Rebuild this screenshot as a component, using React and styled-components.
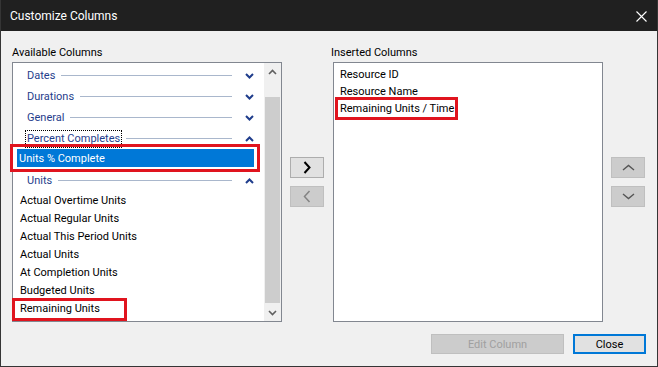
import React from "react";
import styled, { createGlobalStyle } from "styled-components";

const Global = createGlobalStyle`
  html, body { margin: 0; padding: 0; background: #f0f0f0; }
  body { font-family: Roboto, "Open Sans", sans-serif; }
`;

const FONT = `Roboto, "Open Sans", sans-serif`;

const Window = styled.div`
  width: 658px;
  height: 367px;
  box-sizing: border-box;
  border: 1px solid #353535;
  border-top: none;
  background: #f0f0f0;
  display: flex;
  flex-direction: column;
  font-family: ${FONT};
  font-size: 11px;
  color: #000;
`;

const TitleBar = styled.div`
  height: 31px;
  flex: none;
  box-sizing: border-box;
  background: #202020;
  color: #fff;
  display: flex;
  align-items: center;
  justify-content: space-between;
  padding: 1px 10px 0 9px;
  font-size: 12px;
`;

const Content = styled.div`
  padding: 13px 11px 0 11px;
  display: flex;
  flex-direction: column;
`;

const Grid = styled.div`
  display: grid;
  grid-template-columns: 278px 43px 278px 34px;
  grid-template-rows: 18px 260px;
  grid-template-areas:
    "lblL . lblR ."
    "listL mid listR side";
`;

const Label = styled.div`
  grid-area: ${(p) => p.$area};
  line-height: 16px;
  padding-top: 1px;
  margin-left: ${(p) => p.$shift || 0}px;
`;

const ListBox = styled.div`
  grid-area: ${(p) => p.$area};
  width: 270px;
  height: 260px;
  box-sizing: border-box;
  border: 1px solid #828790;
  background: #fff;
  display: flex;
`;

const ListBody = styled.div`
  flex: 1;
  display: flex;
  flex-direction: column;
  padding-top: ${(p) => p.$pad || 1}px;
`;

const GroupHeader = styled.div`
  height: 21px;
  box-sizing: border-box;
  padding: 2px 10px 0 14px;
  display: flex;
  align-items: center;
  color: #1f3d8c;
  gap: 5px;
`;

const HeaderText = styled.span`
  line-height: 16px;
  padding: 0 1px;
  margin-left: -1px;
  outline: ${(p) => (p.$focus ? "1px dotted #000" : "none")};
  outline-offset: 0px;
`;

const HeaderLine = styled.span`
  flex: 1;
  height: 1px;
  background: #a9b7cc;
  margin-right: 8px;
`;

const GroupItems = styled.div`
  display: flex;
  flex-direction: column;
  padding: 1px 0 2px;
`;

const Item = styled.div`
  position: relative;
  height: 18px;
  line-height: 20px;
  margin: 0 10px 0 4px;
  padding-left: ${(p) => (p.$selected ? 2 : 3)}px;
  background: ${(p) => (p.$selected ? "#0078d7" : "transparent")};
  color: ${(p) => (p.$selected ? "#fff" : "#000")};
  white-space: nowrap;
`;

const RightItem = styled.div`
  position: relative;
  height: 17px;
  line-height: 19px;
  padding-left: 6px;
  white-space: nowrap;
`;

const Highlight = styled.span`
  position: absolute;
  top: ${(p) => p.$top}px;
  left: ${(p) => p.$left}px;
  width: ${(p) => p.$w}px;
  height: ${(p) => p.$h}px;
  box-sizing: border-box;
  border: 3px solid #e0141e;
  pointer-events: none;
`;

const ScrollBar = styled.div`
  width: 17px;
  flex: none;
  background: #f0f0f0;
  display: flex;
  flex-direction: column;
`;

const ScrollBtn = styled.div`
  height: 17px;
  flex: none;
  display: flex;
  align-items: center;
  justify-content: center;
`;

const Thumb = styled.div`
  flex: 1;
  margin: 17px 1px 1px;
  background: #cdcdcd;
`;

const ButtonStack = styled.div`
  grid-area: ${(p) => p.$area};
  display: flex;
  flex-direction: column;
  gap: 8px;
  padding-top: 95px;
`;

const ArrowButton = styled.div`
  width: 34px;
  height: 21px;
  box-sizing: border-box;
  border: 1px solid ${(p) => (p.$disabled ? "#bfbfbf" : "#adadad")};
  background: ${(p) => (p.$disabled ? "#cccccc" : "#e1e1e1")};
  display: flex;
  align-items: center;
  justify-content: center;
`;

const Footer = styled.div`
  display: flex;
  justify-content: flex-end;
  gap: 9px;
  margin-top: 12px;
`;

const PushButton = styled.div`
  width: ${(p) => p.$w}px;
  height: 20px;
  box-sizing: border-box;
  display: flex;
  align-items: center;
  justify-content: center;
  padding-top: 1px;
  border: ${(p) => (p.$default ? "2px solid #0078d7" : "1px solid #bfbfbf")};
  background: ${(p) => (p.$disabled ? "#cccccc" : "#e1e1e1")};
  color: ${(p) => (p.$disabled ? "#a0a0a0" : "#000")};
`;

const Chevron = ({ up, color = "#1f3d8c", w = 9, h = 6, sw = 2 }) => (
  <svg width={w} height={h} viewBox={`0 0 ${w} ${h}`}>
    <path
      d={up ? `M1 ${h - 1} L${w / 2} 1.5 L${w - 1} ${h - 1}` : `M1 1 L${w / 2} ${h - 1.5} L${w - 1} 1`}
      fill="none"
      stroke={color}
      strokeWidth={sw}
    />
  </svg>
);

const Side = ({ left, color, sw = 2 }) => (
  <svg width="8" height="13" viewBox="0 0 8 13">
    <path
      d={left ? "M6.5 1 L1.5 6.5 L6.5 12" : "M1.5 1 L6.5 6.5 L1.5 12"}
      fill="none"
      stroke={color}
      strokeWidth={sw}
    />
  </svg>
);

const Group = ({ name, open, focus, children }) => (
  <>
    <GroupHeader>
      <HeaderText $focus={focus}>{name}</HeaderText>
      <HeaderLine />
      <Chevron up={open} />
    </GroupHeader>
    {children && <GroupItems>{children}</GroupItems>}
  </>
);

const unitItems = [
  "Actual Overtime Units",
  "Actual Regular Units",
  "Actual This Period Units",
  "Actual Units",
  "At Completion Units",
  "Budgeted Units",
];

export default function App() {
  return (
    <>
      <Global />
      <Window>
        <TitleBar>
          <span>Customize Columns</span>
          <svg width="11" height="11" viewBox="0 0 11 11">
            <path d="M0.5 0.5 L10.5 10.5 M10.5 0.5 L0.5 10.5" stroke="#fff" strokeWidth="1.1" />
          </svg>
        </TitleBar>
        <Content>
          <Grid>
            <Label $area="lblL">Available Columns</Label>
            <Label $area="lblR" $shift={-2}>Inserted Columns</Label>
            <ListBox $area="listL">
              <ListBody>
                <Group name="Dates" />
                <Group name="Durations" />
                <Group name="General" />
                <Group name="Percent Completes" open focus>
                  <Item $selected>
                    Units % Complete
                    <Highlight $top={-5} $left={-7} $w={250} $h={28} />
                  </Item>
                </Group>
                <Group name="Units" open>
                  {unitItems.map((t) => (
                    <Item key={t}>{t}</Item>
                  ))}
                  <Item>
                    Remaining Units
                    <Highlight $top={-1} $left={-5} $w={115} $h={23} />
                  </Item>
                </Group>
              </ListBody>
              <ScrollBar>
                <ScrollBtn>
                  <Chevron up color="#606060" sw={1.6} />
                </ScrollBtn>
                <Thumb />
                <ScrollBtn>
                  <Chevron color="#606060" sw={1.6} />
                </ScrollBtn>
              </ScrollBar>
            </ListBox>
            <ButtonStack $area="mid">
              <ArrowButton>
                <Side color="#000" />
              </ArrowButton>
              <ArrowButton $disabled>
                <Side left color="#838383" sw={1.5} />
              </ArrowButton>
            </ButtonStack>
            <ListBox $area="listR">
              <ListBody $pad={2}>
                <RightItem>Resource ID</RightItem>
                <RightItem>Resource Name</RightItem>
                <RightItem>
                  Remaining Units / Time
                  <Highlight $top={-2} $left={1} $w={123} $h={23} />
                </RightItem>
              </ListBody>
            </ListBox>
            <ButtonStack $area="side">
              <ArrowButton $disabled>
                <Chevron up color="#555" w={13} h={7} sw={1.4} />
              </ArrowButton>
              <ArrowButton $disabled>
                <Chevron color="#555" w={13} h={7} sw={1.4} />
              </ArrowButton>
            </ButtonStack>
          </Grid>
          <Footer>
            <PushButton $w={133} $disabled>Edit Column</PushButton>
            <PushButton $w={73} $default>Close</PushButton>
          </Footer>
        </Content>
      </Window>
    </>
  );
}
